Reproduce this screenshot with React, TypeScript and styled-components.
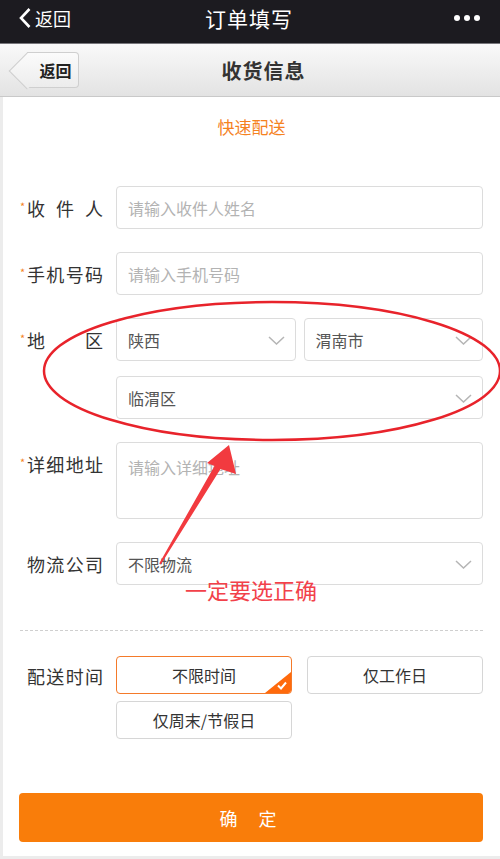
import React from "react";
import styled, { createGlobalStyle } from "styled-components";

const GlobalStyle = createGlobalStyle`
  * {
    box-sizing: border-box;
  }

  body {
    margin: 0;
    background: #fff;
    font-family: "Noto Sans CJK SC", "Noto Sans", sans-serif;
  }
`;

const Page = styled.div`
  position: relative;
  width: 500px;
  min-height: 859px;
  display: flex;
  flex-direction: column;
  background: #fff;
`;

const TopBar = styled.header`
  height: 44px;
  background: #1c1b20;
  border-bottom: 1px solid #77767b;
  display: grid;
  grid-template-columns: 1fr auto 1fr;
  align-items: center;
  padding: 0 20px 7px 18px;
  color: #fff;

  .back {
    display: flex;
    align-items: center;
    gap: 3px;
    font-size: 18px;
  }

  h1 {
    margin: 0;
    font-size: 21px;
    font-weight: 400;
    letter-spacing: 1px;
  }

  .more {
    justify-self: end;
    display: flex;
    gap: 4px;

    span {
      width: 6px;
      height: 6px;
      border-radius: 50%;
      background: #fff;
    }
  }
`;

const NavBar = styled.div`
  height: 53px;
  background: linear-gradient(#f9f9f9, #e3e3e3);
  border-bottom: 1px solid #c9c9c9;
  display: grid;
  grid-template-columns: 1fr auto 1fr;
  align-items: center;
  padding-left: 27px;

  h2 {
    margin: 0;
    font-size: 20px;
    font-weight: 700;
    color: #333;
    letter-spacing: 1px;
  }
`;

const BackButton = styled.button`
  position: relative;
  justify-self: start;
  width: 52px;
  height: 36px;
  padding: 0 0 0 6px;
  border: 1px solid #cfcfcf;
  border-left: none;
  border-radius: 0 4px 4px 0;
  background: linear-gradient(#fbfbfb, #ececec);
  font-family: inherit;
  font-size: 16px;
  font-weight: 700;
  color: #222;

  &::before {
    content: "";
    position: absolute;
    left: -13px;
    top: 5px;
    width: 25px;
    height: 25px;
    transform: rotate(45deg);
    border-left: 1px solid #cfcfcf;
    border-bottom: 1px solid #cfcfcf;
    background: linear-gradient(135deg, #fbfbfb, #ececec);
    z-index: 0;
  }

  span {
    position: relative;
    z-index: 1;
  }
`;

const Content = styled.main`
  flex: 1;
  border-left: 3px solid #ececec;
  border-bottom: 3px solid #ececec;
  padding-bottom: 14px;
  display: flex;
  flex-direction: column;
`;

const SectionTitle = styled.div`
  padding-top: 17px;
  line-height: 26px;
  text-align: center;
  font-size: 17px;
  color: #f5821f;
`;

const Form = styled.div`
  margin-top: 46px;
  display: flex;
  flex-direction: column;
  gap: 23px;
  padding: 0 17px;
`;

const Row = styled.div`
  display: flex;
  align-items: flex-start;
  gap: 13px;
`;

const Label = styled.div`
  width: 83px;
  height: 43px;
  flex-shrink: 0;
  display: flex;
  align-items: center;
  font-size: 18px;
  color: #333;

  .star {
    width: 7px;
    align-self: center;
    margin-top: -3px;
    font-size: 11px;
    color: #f5821f;
  }

  .text {
    flex: 1;
    display: flex;
    justify-content: space-between;
  }
`;

const Field = styled.div<{ $tall?: boolean }>`
  position: relative;
  flex: 1;
  height: ${(p) => (p.$tall ? "77px" : "43px")};
  border: 1px solid #dcdcdc;
  border-radius: 4px;
  background: #fff;
  display: flex;
  align-items: ${(p) => (p.$tall ? "flex-start" : "center")};
  padding: ${(p) => (p.$tall ? "12px 11px" : "0 11px")};
  font-size: 16px;
  color: #555;
`;

const Placeholder = styled.span`
  color: #b3b3b3;
`;

const Chevron = styled.svg`
  position: absolute;
  right: 10px;
  top: 50%;
  margin-top: -4px;
`;

const AreaGrid = styled.div`
  flex: 1;
  display: grid;
  grid-template-columns: 1fr 1fr;
  gap: 15px 8px;

  .full {
    grid-column: span 2;
  }
`;

const Divider = styled.hr`
  margin: 45px 17px 0;
  border: none;
  border-top: 1px dashed #cfcfcf;
`;

const TimeRow = styled(Row)`
  margin-top: 25px;
  padding: 0 17px;
  align-items: flex-start;

  ${Label} {
    height: 40px;
  }
`;

const OptionGrid = styled.div`
  flex: 1;
  display: grid;
  grid-template-columns: 1fr 1fr;
  gap: 7px 15px;
`;

const Option = styled.div<{ $active?: boolean }>`
  position: relative;
  overflow: hidden;
  height: 38px;
  border: 1px solid ${(p) => (p.$active ? "#f47a2a" : "#d6d6d6")};
  border-radius: 4px;
  display: flex;
  align-items: center;
  justify-content: center;
  font-size: 16px;
  color: #333;

  svg {
    position: absolute;
    right: 0;
    bottom: 0;
  }
`;

const ConfirmButton = styled.button`
  margin: 54px 17px 0 16px;
  height: 49px;
  border: none;
  border-radius: 4px;
  background: #f97d0a;
  color: #fff;
  font-family: inherit;
  font-size: 18px;
  letter-spacing: 21px;
  padding-left: 21px;
`;

const Overlay = styled.svg`
  position: absolute;
  left: 0;
  top: 0;
  pointer-events: none;
`;

const Note = styled.span`
  position: absolute;
  left: 185px;
  top: 575px;
  font-size: 22px;
  line-height: 28px;
  color: #f2414a;
  pointer-events: none;
`;

const DownArrow = () => (
  <Chevron width="17" height="9" viewBox="0 0 17 9">
    <path d="M1 1l7.5 7 7.5-7" fill="none" stroke="#b5b5b5" strokeWidth="1.5" />
  </Chevron>
);

const FieldLabel = ({ text, required = true }: { text: string; required?: boolean }) => (
  <Label>
    <span className="star" style={{ visibility: required ? "visible" : "hidden" }}>
      *
    </span>
    <span className="text">
      {text.split("").map((c, i) => (
        <span key={i}>{c}</span>
      ))}
    </span>
  </Label>
);

const App = () => {
  return (
    <Page>
      <GlobalStyle />
      <TopBar>
        <div className="back">
          <svg width="14" height="22" viewBox="0 0 14 22">
            <path d="M11.5 2L3 11l8.5 9" fill="none" stroke="#fff" strokeWidth="2.6" />
          </svg>
          返回
        </div>
        <h1>订单填写</h1>
        <div className="more">
          <span />
          <span />
          <span />
        </div>
      </TopBar>

      <NavBar>
        <BackButton>
          <span>返回</span>
        </BackButton>
        <h2>收货信息</h2>
      </NavBar>

      <Content>
        <SectionTitle>快速配送</SectionTitle>

        <Form>
          <Row>
            <FieldLabel text="收件人" />
            <Field>
              <Placeholder>请输入收件人姓名</Placeholder>
            </Field>
          </Row>
          <Row>
            <FieldLabel text="手机号码" />
            <Field>
              <Placeholder>请输入手机号码</Placeholder>
            </Field>
          </Row>
          <Row>
            <FieldLabel text="地区" />
            <AreaGrid>
              <Field>
                陕西
                <DownArrow />
              </Field>
              <Field>
                渭南市
                <DownArrow />
              </Field>
              <Field className="full">
                临渭区
                <DownArrow />
              </Field>
            </AreaGrid>
          </Row>
          <Row>
            <FieldLabel text="详细地址" />
            <Field $tall>
              <Placeholder>请输入详细地址</Placeholder>
            </Field>
          </Row>
          <Row>
            <FieldLabel text="物流公司" required={false} />
            <Field>
              不限物流
              <DownArrow />
            </Field>
          </Row>
        </Form>

        <Divider />

        <TimeRow>
          <FieldLabel text="配送时间" required={false} />
          <OptionGrid>
            <Option $active>
              不限时间
              <svg width="26" height="21" viewBox="0 0 26 21">
                <path d="M26 0V21H0Z" fill="#ff6a0c" />
                <path d="M13 13.5l3 3 5-6" fill="none" stroke="#fff" strokeWidth="2" />
              </svg>
            </Option>
            <Option>仅工作日</Option>
            <Option>仅周末/节假日</Option>
          </OptionGrid>
        </TimeRow>

        <ConfirmButton>确定</ConfirmButton>
      </Content>

      <Overlay width="500" height="859" viewBox="0 0 500 859">
        <ellipse cx="272" cy="371" rx="228" ry="69" fill="none" stroke="#e8232b" strokeWidth="2.5" />
        <path
          d="M229 445L236 474L220.5 469L160.8 564.5L159.2 563.5L214.5 466L207 463Z"
          fill="#f23a3f"
        />
      </Overlay>
      <Note>一定要选正确</Note>
    </Page>
  );
};

export default App;
